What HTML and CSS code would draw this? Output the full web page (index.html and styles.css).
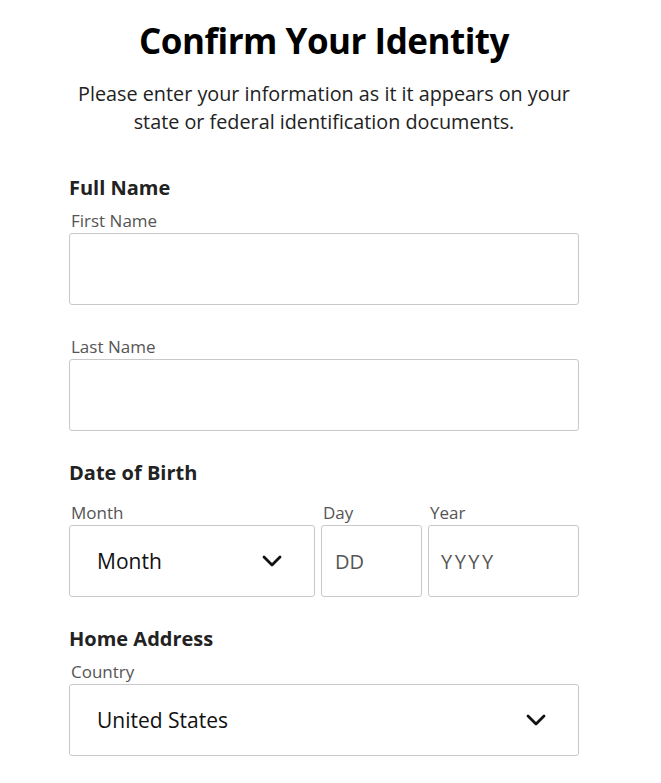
FILE: index.html
```html
<!DOCTYPE html>
<html lang="en">
<head>
<meta charset="utf-8">
<title>Confirm Your Identity</title>
<link rel="stylesheet" href="styles.css">
</head>
<body>
<main class="page">
  <h1 class="title">Confirm Your Identity</h1>
  <p class="intro">Please enter your information as it it appears on your state or federal identification documents.</p>

  <section class="group group-first">
    <h2 class="group-title">Full Name</h2>
    <div class="field">
      <label class="label" for="first">First Name</label>
      <input class="input" id="first" type="text">
    </div>
    <div class="field field-gap">
      <label class="label" for="last">Last Name</label>
      <input class="input" id="last" type="text">
    </div>
  </section>

  <section class="group group-dob">
    <h2 class="group-title">Date of Birth</h2>
    <div class="dob">
      <div class="field">
        <label class="label">Month</label>
        <div class="select">
          <span class="select-value">Month</span>
          <svg class="chevron" width="20" height="12" viewBox="0 0 20 12"><path d="M2 2 L10 10 L18 2" fill="none" stroke="#111" stroke-width="2.8" stroke-linecap="round" stroke-linejoin="round"/></svg>
        </div>
      </div>
      <div class="field">
        <label class="label">Day</label>
        <div class="input placeholder">DD</div>
      </div>
      <div class="field">
        <label class="label">Year</label>
        <div class="input placeholder year">YYYY</div>
      </div>
    </div>
  </section>

  <section class="group group-home">
    <h2 class="group-title">Home Address</h2>
    <div class="field">
      <label class="label">Country</label>
      <div class="select">
        <span class="select-value">United States</span>
        <svg class="chevron" width="20" height="12" viewBox="0 0 20 12"><path d="M2 2 L10 10 L18 2" fill="none" stroke="#111" stroke-width="2.8" stroke-linecap="round" stroke-linejoin="round"/></svg>
      </div>
    </div>
  </section>
</main>
</body>
</html>
```
FILE: styles.css
```css
* { box-sizing: border-box; }
html, body { margin: 0; padding: 0; background: #fff; }
body {
  font-family: "Open Sans", "Noto Sans", sans-serif;
  color: #222;
}
.page {
  width: 510px;
  margin-left: 69px;
  padding-top: 18px;
}
.title {
  margin: 0;
  text-align: center;
  font-size: 35px;
  line-height: 46px;
  letter-spacing: -0.5px;
  font-weight: 700;
  color: #000;
}
.intro {
  margin: 16px 0 0;
  text-align: center;
  font-size: 19.8px;
  line-height: 28px;
  color: #222;
}
.group-first { margin-top: 39px; }
.group-dob { margin-top: 29px; }
.group-home { margin-top: 29px; }
.group-title {
  margin: 0;
  font-size: 20px;
  line-height: 26px;
  font-weight: 700;
  color: #222;
}
.group-first .group-title,
.group-home .group-title { margin-bottom: 8px; }
.group-dob .group-title { margin-bottom: 15px; }
.field { display: flex; flex-direction: column; }
.field-gap { margin-top: 30px; }
.label {
  padding-left: 2px;
  font-size: 17px;
  line-height: 24px;
  color: #555;
}
.input {
  display: flex;
  align-items: center;
  height: 72px;
  border: 1px solid #c8c8c8;
  border-radius: 3px;
  background: #fff;
  font: inherit;
  padding: 0 13px;
}
.placeholder { font-size: 20px; color: #555; }
.year { padding-left: 12px; letter-spacing: 2.5px; }
.dob {
  display: grid;
  grid-template-columns: 246px 101px 151px;
  column-gap: 6px;
}
.select {
  display: flex;
  align-items: center;
  justify-content: space-between;
  height: 72px;
  border: 1px solid #c8c8c8;
  border-radius: 3px;
  padding: 0 32px 0 27px;
}
.select-value { font-size: 21px; color: #111; }
.chevron { display: block; }
```
